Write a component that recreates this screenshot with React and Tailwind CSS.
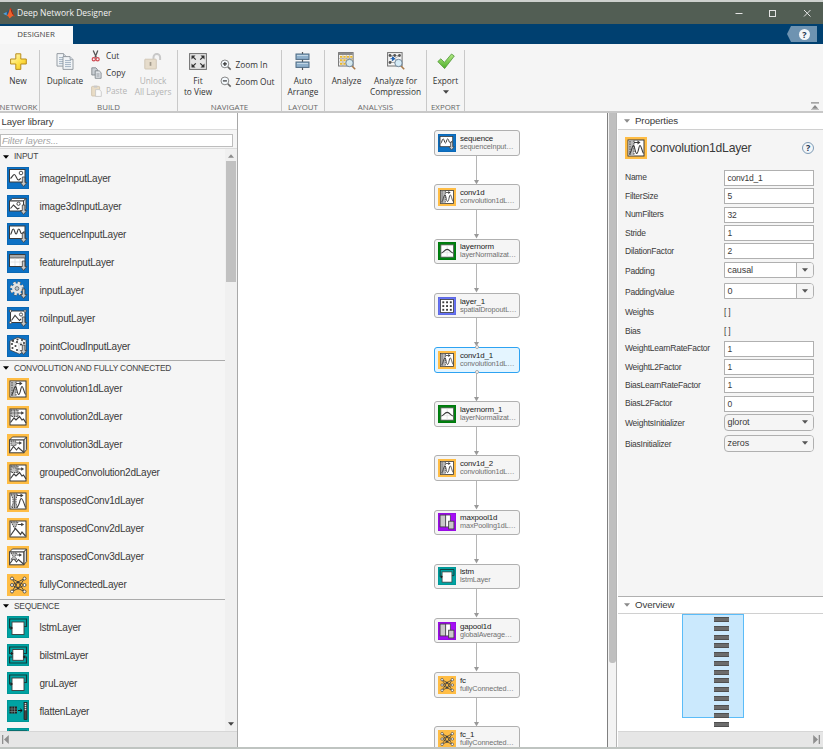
import clsx from 'clsx'

const dark = '#3c3c3c'

/* ---------- layer icons (22 x 22) ---------- */

const tileColors = {
  blue: '#0d71c4',
  amber: '#ffbd45',
  teal: '#00a3a3',
  green: '#00820f',
  indigo: '#6672f5',
  purple: '#a40cf5',
}

function Tile({ color, size = 22, children }) {
  return (
    <svg width={size} height={size} viewBox="0 0 22 22" className="block shrink-0" fill="none">
      <rect width="22" height="22" fill={tileColors[color]} />
      {color !== 'amber' && <rect x=".5" y=".5" width="21" height="21" stroke="#000" strokeOpacity=".08" />}
      {children}
    </svg>
  )
}

function DownArrow() {
  return <path d="M15.3 10h2.6v5.500h1.900l-3.200 4-3.200-4h1.900z" fill="#c9c9c9" stroke={dark} strokeWidth=".8" />
}

function CubeSides() {
  return (
    <g stroke={dark} strokeWidth=".9" strokeLinejoin="round">
      <path d="M2.6 6 5.4 3h14.2l-2.8 3z" fill="#fff" />
      <path d="M16.8 6l2.8-3v12.6l-2.8 3.2z" fill="#d8d8d8" />
    </g>
  )
}

function LayerIcon({ kind, size }) {
  switch (kind) {
    case 'image':
      return (
        <Tile color="blue" size={size}>
          <rect x="2.5" y="2.5" width="15.500" height="12.500" fill="#fff" stroke={dark} />
          <path d="M3.500 11.500c1.500-1 2.500-4 3.800-4 1.700 0 2.200 5.500 4.200 5.500 1 0 1.500-1.500 2.500-1.500" stroke={dark} strokeWidth="1.100" />
          <circle cx="14" cy="6" r="1.800" stroke={dark} strokeWidth=".9" />
          <DownArrow />
        </Tile>
      )
    case 'image3d':
      return (
        <Tile color="blue" size={size}>
          <path d="M2.500 6l3-2.600H19L16.500 6z" fill="#fff" stroke={dark} strokeWidth=".9" />
          <path d="M16.500 6L19 3.400v10l-2.500 3z" fill="#d8d8d8" stroke={dark} strokeWidth=".9" />
          <rect x="2.500" y="6" width="14" height="10" fill="#fff" stroke={dark} />
          <path d="M3.500 13.500L6.500 10l4 4 2-1" stroke={dark} strokeWidth="1.100" />
          <circle cx="11.500" cy="8.800" r="1.600" stroke={dark} strokeWidth=".9" />
          <DownArrow />
        </Tile>
      )
    case 'sequence':
      return (
        <Tile color="blue" size={size}>
          <rect x="2.500" y="3" width="15.500" height="12.500" fill="#fff" stroke={dark} />
          <path d="M3.500 11.500C4.700 11 4.800 6 6.300 6s1.400 5 2.800 5 1.200-5 2.700-5 1.400 4.500 2.700 4.500 1.500-1 3-2" stroke={dark} strokeWidth="1.200" />
          <DownArrow />
        </Tile>
      )
    case 'feature':
      return (
        <Tile color="blue" size={size}>
          <rect x="2.500" y="3.500" width="15.500" height="12" fill="#fff" stroke={dark} />
          <path d="M3 4h14.500v3H3z" fill="#a8a8a8" />
          <path d="M3 7h15" stroke={dark} strokeWidth=".7" />
          <path d="M3.500 11h14M8 7.500V15M13 7.500V15" stroke="#dedede" strokeWidth=".8" />
          <DownArrow />
        </Tile>
      )
    case 'input':
      return (
        <Tile color="blue" size={size}>
          <circle cx="10" cy="9.500" r="5.600" stroke="#555" strokeWidth="3.200" strokeDasharray="2.700 1.700" />
          <circle cx="10" cy="9.500" r="5.600" stroke="#e4e4e4" strokeWidth="2.400" strokeDasharray="2.400 2" />
          <circle cx="10" cy="9.500" r="4.900" fill="#e4e4e4" />
          <circle cx="10" cy="9.500" r="1.900" fill="#b9c7d2" stroke="#555" strokeWidth=".7" />
          <DownArrow />
        </Tile>
      )
    case 'roi':
      return (
        <Tile color="blue" size={size}>
          <rect x="3.500" y="4" width="14.500" height="11.500" fill="#fff" stroke={dark} />
          <path d="M4.500 13.500l3.500-5 4.500 5 1.500-1.500" stroke={dark} strokeWidth="1.100" />
          <circle cx="14" cy="7.500" r="1.600" stroke={dark} strokeWidth=".9" />
          {[[3.5, 4], [18, 4], [3.5, 15.5]].map(([x, y]) => (
            <circle key={`${x}-${y}`} cx={x} cy={y} r="1.200" fill="#fff" stroke={dark} strokeWidth=".8" />
          ))}
          <DownArrow />
        </Tile>
      )
    case 'pointcloud':
      return (
        <Tile color="blue" size={size}>
          <path d="M3 6l7.500-3.500L19 5v10l-6.500 4L3 15z" fill="#fff" stroke={dark} strokeWidth=".8" />
          <path d="M3 6l9 2.500V19M12 8.500L19 5" stroke="#bbb" strokeWidth=".6" />
          {[[6, 5.9], [10.5, 4.5], [10, 7], [15, 5], [5, 9], [8.5, 11], [5.5, 13], [10, 15], [14, 9.5], [17, 8]].map(([x, y]) => (
            <circle key={`${x}-${y}`} cx={x} cy={y} r="1.050" fill={dark} />
          ))}
          <DownArrow />
        </Tile>
      )
    case 'conv1d':
      return (
        <Tile color="amber" size={size}>
          <rect x="3" y="3" width="16" height="16" fill="#fff" stroke={dark} />
          <path d="M3.500 3.500H9v15H3.500z" fill="#b9b9b9" />
          <path d="M9 3.500v15M5 4v15" stroke={dark} strokeWidth=".9" strokeDasharray="1.500 1" />
          <path d="M4.500 17C6.500 16 6.800 9 8.300 8.500c1.700 0 1.700 8 3.400 8s2-8 3.300-8 1.800 5.500 3.500 8" stroke={dark} strokeWidth="1.100" />
          <path d="M9 5.500h4" stroke={dark} />
          <path d="M12.500 3.600l3 1.900-3 1.900z" fill={dark} />
        </Tile>
      )
    case 'conv2d':
    case 'group2d':
      return (
        <Tile color="amber" size={size}>
          <rect x="3" y="3" width="16" height="16" fill="#fff" stroke={dark} />
          <path d="M3.500 16.500L7 12l2 2 3.500-3.500 2.500 3.500 1.500-1 2.500 4" stroke={dark} strokeWidth="1.200" />
          <path d="M4 4h7v6.500H4z" fill="#c4c4c4" stroke={dark} strokeWidth=".9" strokeDasharray="1.500 .8" />
          {kind === 'conv2d' ? (
            <path d="M7.500 4v6M4 7h7" stroke={dark} strokeWidth=".5" />
          ) : (
            <path d="M5 5h4v4M6 6h4v4" stroke={dark} strokeWidth=".6" strokeDasharray="1 .7" />
          )}
          <path d="M11 7h4" stroke={dark} />
          <path d="M14.200 5.200l3 1.800-3 1.800z" fill={dark} />
        </Tile>
      )
    case 'conv3d':
    case 'trans3d':
      return (
        <Tile color="amber" size={size}>
          <CubeSides />
          <rect x="2.600" y="6" width="14.200" height="12.800" fill="#fff" stroke={dark} />
          <path d="M3 17.500l3.500-5 3 3.500 2-2.500 2 2 3 2.500" stroke={dark} strokeWidth="1.100" />
          {kind === 'conv3d' ? (
            <path d="M4 7h5v4.500H4z" fill="#b9b9b9" stroke={dark} strokeWidth=".8" strokeDasharray="1.300 .7" />
          ) : (
            <path d="M4 7h6l-2 3.500 2 3H4l2-3z" fill="#b9b9b9" stroke={dark} strokeWidth=".8" strokeDasharray="1.300 .7" />
          )}
          <path d="M9.500 9h3.500" stroke={dark} />
          <path d="M12.200 7.300L15 9l-2.800 1.700z" fill={dark} />
        </Tile>
      )
    case 'trans1d':
      return (
        <Tile color="amber" size={size}>
          <rect x="3" y="3" width="16" height="16" fill="#fff" stroke={dark} />
          <path d="M4 4h6.500L9 9v4.500l1.800 4H4.500L6 13.500V9z" fill="#b9b9b9" stroke={dark} strokeWidth=".9" strokeDasharray="1.500 .8" />
          <path d="M7.500 5v12" stroke={dark} strokeWidth=".7" />
          <path d="M10 17c2.500-1 2.700-8.500 4.200-8.500S17 13 18.500 17.500" stroke={dark} strokeWidth="1.100" />
          <path d="M10 5.500h4" stroke={dark} />
          <path d="M13.500 3.600l3 1.900-3 1.900z" fill={dark} />
        </Tile>
      )
    case 'trans2d':
      return (
        <Tile color="amber" size={size}>
          <rect x="3" y="3" width="16" height="16" fill="#fff" stroke={dark} />
          <path d="M3.500 17.500l5-7 5 6 1.500-2.500 3.500 4" stroke={dark} strokeWidth="1.200" />
          <path d="M4 4h7L9.500 7.500l-2 3L6 7.500z" fill="#b9b9b9" stroke={dark} strokeWidth=".9" strokeDasharray="1.500 .8" />
          <path d="M11 6.500h4" stroke={dark} />
          <path d="M14.200 4.700l3 1.800-3 1.800z" fill={dark} />
        </Tile>
      )
    case 'fc':
      return (
        <Tile color="amber" size={size}>
          <path d="M5 4.500l6 3.500 6.500-3.500M5 11l6-3 6.500 3M5 11l6 3.500 6.500-3.500M5 17.500l6-3 6.500 3M5 4.500l6 10M5 17.500L11 8M11 8l6.500 9.500M11 14.500l6.500-10" stroke={dark} strokeWidth=".9" />
          {[[5, 4.5], [5, 11], [5, 17.5], [17.5, 4.5], [17.5, 11], [17.5, 17.5]].map(([x, y]) => (
            <circle key={`${x}-${y}`} cx={x} cy={y} r="1.500" fill="#fff" stroke={dark} strokeWidth=".8" />
          ))}
          <circle cx="11" cy="8" r="1.100" fill={dark} />
          <circle cx="11" cy="14.500" r="1.100" fill={dark} />
        </Tile>
      )
    case 'lstm':
      return (
        <Tile color="teal" size={size}>
          <path d="M5 12H2.600V3h16.900v7.500H17" stroke="#123c3c" strokeWidth="1.200" />
          <rect x="5" y="6" width="12" height="12.500" fill="#fff" stroke={dark} strokeWidth=".9" />
          <path d="M3.500 10l2.500 2-2.500 2z" fill="#222" />
        </Tile>
      )
    case 'bilstm':
      return (
        <Tile color="teal" size={size}>
          <path d="M6 9.500H2.600V3h16.900v6.500H16M6 13H2.600v6h16.900v-6H16" stroke="#123c3c" strokeWidth="1.200" />
          <rect x="5.800" y="5.500" width="10.600" height="10.800" fill="#fff" stroke={dark} strokeWidth=".9" />
          <path d="M4 7.700l2.500 1.800L4 11.300zM18.200 11l-2.500 1.900 2.500 1.900z" fill="#222" />
        </Tile>
      )
    case 'flatten':
      return (
        <Tile color="teal" size={size}>
          <rect x="2.500" y="6.500" width="7.500" height="7" fill="#222" />
          <path d="M5 6.500v7M7.500 6.500v7M2.500 9H10M2.500 11.500H10" stroke="#8aa" strokeWidth=".5" />
          <path d="M11 10.500h4M13.200 8.800l2 1.700-2 1.700" stroke="#111" />
          <rect x="17" y="2.500" width="3" height="17" fill="#444" stroke="#111" strokeWidth=".6" />
          <path d="M18.500 3v8" stroke="#ddd" strokeDasharray="1.200 .8" strokeWidth="1.500" />
        </Tile>
      )
    case 'norm':
      return (
        <Tile color="green" size={size}>
          <rect x="3.500" y="3.500" width="15.500" height="15" fill="#fff" stroke="#555" />
          <path d="M11.200 4v14M4 13h14.500" stroke="#ddd" strokeWidth=".8" />
          <path d="M4 13.500c2.500 0 4-4.500 7.200-4.500s4.800 4.500 7.300 4.500" stroke={dark} strokeWidth="1.300" />
        </Tile>
      )
    case 'grid':
      return (
        <Tile color="indigo" size={size}>
          <rect x="3" y="3" width="16" height="16" fill="#fff" stroke={dark} />
          {[5.3, 9.9, 14.5].map((y) => [5.3, 9.9, 14.5].map((x) => (
            <rect key={`${x}-${y}`} x={x} y={y} width="2.300" height="2.300" fill={dark} />
          )))}
        </Tile>
      )
    case 'pool':
      return (
        <Tile color="purple" size={size}>
          <rect x="2.500" y="2.500" width="7" height="14.500" fill="#c9c9c9" stroke={dark} />
          <rect x="9.500" y="2.500" width="5.500" height="14.500" fill="#fff" stroke={dark} strokeWidth=".8" />
          <rect x="13" y="10" width="6.500" height="9.500" fill="#c9c9c9" stroke={dark} />
        </Tile>
      )
    default:
      return null
  }
}

/* ---------- toolstrip icons ---------- */

function NewIcon() {
  return (
    <svg width="17" height="17" viewBox="0 0 17 17">
      <defs>
        <linearGradient id="gold" x1="0" y1="0" x2="1" y2="1">
          <stop offset="0" stopColor="#fffbd0" />
          <stop offset=".55" stopColor="#ffe14a" />
          <stop offset="1" stopColor="#eebc14" />
        </linearGradient>
      </defs>
      <path d="M5.800.8h5v5.200h5.500v5h-5.500v5.400h-5V11H.6V6h5.200z" fill="url(#gold)" stroke="#b98d1d" />
    </svg>
  )
}

function Page({ x, y, w, h, lines }) {
  return (
    <g transform={`translate(${x} ${y})`}>
      <path d={`M0 0h${w - 3}l3 3v${h - 3}H0z`} fill="#f1f4f7" stroke="#8d949b" strokeWidth=".9" />
      <path d={`M${w - 3} 0v3h3`} fill="#cfd6dd" stroke="#8d949b" strokeWidth=".7" />
      {lines.map((ly) => (
        <path key={ly} d={`M2 ${ly}h${w - 4}`} stroke="#9aabbc" strokeWidth=".9" />
      ))}
    </g>
  )
}

function DuplicateIcon() {
  return (
    <svg width="18" height="17" viewBox="0 0 18 17">
      <Page x={1} y={0.6} w={9.5} h={12.5} lines={[4, 6, 8, 10]} />
      <Page x={7} y={3.6} w={10} h={12.8} lines={[4, 6, 8, 10]} />
    </svg>
  )
}

function CutIcon() {
  return (
    <svg width="11" height="12" viewBox="0 0 11 12" fill="none">
      <path d="M2.200.5l3.200 7M6.800.5L4 7.500" stroke="#555" strokeWidth="1.300" />
      <circle cx="2.800" cy="9.200" r="1.600" stroke="#cf4a52" strokeWidth="1.200" />
      <circle cx="6.600" cy="9.200" r="1.600" stroke="#cf4a52" strokeWidth="1.200" />
    </svg>
  )
}

function CopyIcon() {
  return (
    <svg width="11" height="12" viewBox="0 0 11 12">
      <path d="M.8.8h4l1.500 1.500V8H.8z" fill="#c9ced3" stroke="#767d84" strokeWidth=".8" />
      <path d="M4.200 3.800h4l1.900 1.900v5.600H4.200z" fill="#dfe3e7" stroke="#767d84" strokeWidth=".8" />
      <path d="M5.500 7h3M5.500 9h3" stroke="#767d84" strokeWidth=".7" />
    </svg>
  )
}

function PasteIcon() {
  return (
    <svg width="11" height="12" viewBox="0 0 11 12">
      <rect x=".6" y="1.400" width="8" height="9.600" rx=".8" fill="#e9dcc5" stroke="#cdbfa8" strokeWidth=".8" />
      <path d="M2.800.6h3.500v2H2.800z" fill="#c9c9c9" />
      <path d="M4.600 4.600h3.700l2 1.900v4.900H4.600z" fill="#fafafa" stroke="#c4c4c4" strokeWidth=".8" />
    </svg>
  )
}

function UnlockIcon() {
  return (
    <svg width="18" height="17" viewBox="0 0 18 17" fill="none">
      <path d="M9.500 6V4.200a3.300 3.300 0 0 1 6.600 0V7" stroke="#c9c9c9" strokeWidth="2" />
      <rect x=".8" y="6.200" width="11.500" height="9.800" rx=".6" fill="#e6dccb" stroke="#cfc4b2" strokeWidth=".9" />
      <path d="M6.500 9v3.800" stroke="#a29a8c" strokeWidth="1.700" />
    </svg>
  )
}

function FitIcon() {
  return (
    <svg width="18" height="17" viewBox="0 0 18 17">
      <rect x=".6" y=".6" width="16.800" height="15.800" fill="#e6e6e6" stroke="#6e6e6e" />
      <path d="M2.500 2.500h4L2.500 6.500zM15.500 2.500h-4l4 4zM2.500 14.500h4l-4-4zM15.500 14.500h-4l4-4z" fill="#333" />
      <path d="M4 4l2.800 2.600M14 4l-2.800 2.600M4 13l2.800-2.600M14 13l-2.800-2.600" stroke="#333" strokeWidth="1.200" />
    </svg>
  )
}

function ZoomIcon({ plus }) {
  return (
    <svg width="12" height="12" viewBox="0 0 12 12" fill="none">
      <path d="M7.500 7.500l3.200 3.100" stroke="#666" strokeWidth="1.700" />
      <circle cx="4.900" cy="4.900" r="3.900" fill="#f4f9fd" stroke="#888" />
      <path d={plus ? 'M2.900 4.900h4M4.900 2.900v4' : 'M2.900 4.900h4'} stroke="#333" strokeWidth="1.200" />
    </svg>
  )
}

function ArrangeIcon() {
  return (
    <svg width="17" height="18" viewBox="0 0 17 18">
      <path d="M8.500 0v18" stroke="#555" strokeWidth="1.200" />
      <rect x="2" y="2" width="13" height="5.400" fill="#8fb0cb" stroke="#4f6a82" />
      <rect x="2" y="10" width="13" height="5.400" fill="#8fb0cb" stroke="#4f6a82" />
      <path d="M3 3.500h11M3 11.500h11" stroke="#c3d7e6" />
    </svg>
  )
}

function AnalyzeIcon() {
  return (
    <svg width="18" height="18" viewBox="0 0 18 18" fill="none">
      <rect x=".6" y=".6" width="14.500" height="13.400" fill="#fff" stroke="#707070" />
      <path d="M1 1h13.800v2H1z" fill="#8a8a8a" />
      <path d="M4.900 3v11M8.300 3v11M11.600 3v11M1 6.500h14M1 10h14" stroke="#999" strokeWidth=".6" />
      {[3.8, 7.2, 10.8].map((y) => [2, 5.4, 8.8, 12.2].map((x) => (
        <rect key={`${x}-${y}`} x={x} y={y} width="2.300" height="2" fill="#e9b72e" />
      )))}
      <path d="M13.800 13.800l3.400 3.400" stroke="#a97a4a" strokeWidth="1.600" />
      <circle cx="11.500" cy="11" r="3.700" fill="#d3ebf8" fillOpacity=".9" stroke="#73879a" />
    </svg>
  )
}

function CompressIcon() {
  return (
    <svg width="18" height="18" viewBox="0 0 18 18" fill="none">
      <rect x=".6" y=".6" width="14.500" height="13.400" fill="#f4f4f4" stroke="#707070" />
      <path d="M3 3.500l4.500 3L3 10.500M12.500 3.500l-5 3 5 3.500M3 3.500h9.500M3 10.500h5" stroke="#8e8e8e" strokeWidth=".7" />
      {[[3, 3.5], [3, 10.5], [7.7, 3.5], [12.5, 3.5]].map(([x, y]) => (
        <circle key={`${x}-${y}`} cx={x} cy={y} r="1.400" fill="#555" />
      ))}
      <path d="M3.500 6.700H7M5.500 4.900l2.400 1.800-2.400 1.800z" fill="#1f62b5" stroke="#1f62b5" />
      <path d="M13.800 13.800l3.400 3.400" stroke="#a97a4a" strokeWidth="1.600" />
      <circle cx="11.500" cy="11" r="3.700" fill="#d3ebf8" fillOpacity=".9" stroke="#73879a" />
    </svg>
  )
}

function ExportIcon() {
  return (
    <svg width="18" height="17" viewBox="0 0 18 17">
      <defs>
        <linearGradient id="leaf" x1="0" y1="0" x2="0" y2="1">
          <stop offset="0" stopColor="#b4ea86" />
          <stop offset="1" stopColor="#4cae28" />
        </linearGradient>
      </defs>
      <path d="M.8 8.600l3-2.800 3.600 3.600L14.500 1l2.800 2L7.600 15.600z" fill="url(#leaf)" stroke="#4f9636" strokeWidth=".8" strokeLinejoin="round" />
    </svg>
  )
}

function MatlabLogo() {
  return (
    <svg width="12" height="12" viewBox="0 0 11 11">
      <path d="M.2 6.200L3.400 4.600 5 5.600 3.400 7.800z" fill="#4fa3dd" />
      <path d="M3.400 4.600C4.800 4 5.400 2 6.600.6L5.800 6 3.400 7.800z" fill="#28517d" />
      <path d="M6.600.6c1.200.4 2.200 5 4.200 8.200-1.600-.8-2.400-.6-3.200.4-.7.8-1.300 1.100-1.900 1.200-.3-1.300-1.100-2.200-2.300-2.600C5.400 6.400 5.600 2.400 6.600.6z" fill="#f0622a" />
      <path d="M6.600.6c1.200.4 2.200 5 4.200 8.200C8.600 7.400 7.200 4 6.600.6z" fill="#8c1d13" />
    </svg>
  )
}

function HelpIcon({ bordered }) {
  return (
    <span
      className={clsx(
        "flex items-center justify-center rounded-full bg-[#f2f6f9] font-['Open_Sans',sans-serif] text-[9px] font-bold leading-none text-[#1d3550]",
        bordered ? 'size-[12px] border border-[#7f9bb5]' : 'size-[11px]'
      )}
    >
      ?
    </span>
  )
}

function Caret({ className }) {
  return (
    <svg width="6" height="4" viewBox="0 0 6 4" className={clsx('block shrink-0', className)}>
      <path d="M0 .3h6L3 3.700z" fill="currentColor" />
    </svg>
  )
}

/* ---------- toolstrip ---------- */

function Section({ title, className, children }) {
  return (
    <div className={clsx('mt-[6px] flex shrink-0 flex-col border-r border-[#c9c9c9]', className)}>
      <div className="flex h-[51px] shrink-0 justify-center">{children}</div>
      <div className="flex h-[10px] shrink-0 justify-center whitespace-nowrap pt-px text-[7.900px] leading-[10px] text-[#666]">{title}</div>
    </div>
  )
}

function BigButton({ icon, lines, disabled, caret, className }) {
  return (
    <div
      className={clsx(
        'flex shrink-0 flex-col items-center whitespace-nowrap text-[8.300px] leading-[11.700px]',
        disabled ? 'text-[#b3b3b3]' : 'text-[#333]',
        className
      )}
    >
      <div className="mt-[2px] mb-[4.500px] flex h-[18px] items-center">{icon}</div>
      {lines.map((line) => (
        <span key={line}>{line}</span>
      ))}
      {caret && <Caret className="mt-[4px] text-[#444]" />}
    </div>
  )
}

function SmallButton({ icon, label, disabled }) {
  return (
    <div className={clsx('flex h-[17.600px] items-center gap-[4px] whitespace-nowrap text-[8.300px]', disabled ? 'text-[#b3b3b3]' : 'text-[#333]')}>
      {icon}
      <span>{label}</span>
    </div>
  )
}

function Toolstrip() {
  return (
    <div className="flex h-[69px] shrink-0 border-b-2 border-[#c8c8c8] bg-[#f5f5f5]">
      <Section title="NETWORK" className="w-[40px] pr-[2px]">
        <BigButton icon={<NewIcon />} lines={['New']} className="-ml-px" />
      </Section>
      <Section title="BUILD" className="w-[138px]">
        <BigButton icon={<DuplicateIcon />} lines={['Duplicate']} className="w-[48px]" />
        <div className="-mt-[3px] ml-[2px] w-[42px]">
          <SmallButton icon={<CutIcon />} label="Cut" />
          <SmallButton icon={<CopyIcon />} label="Copy" />
          <SmallButton icon={<PasteIcon />} label="Paste" disabled />
        </div>
        <BigButton icon={<UnlockIcon />} lines={['Unlock', 'All Layers']} disabled className="mr-[3px] w-[40px]" />
      </Section>
      <Section title="NAVIGATE" className="w-[104px]">
        <BigButton icon={<FitIcon />} lines={['Fit', 'to View']} className="w-[40px]" />
        <div className="w-[63px] pt-[6px] pl-[1.500px]">
          <SmallButton icon={<ZoomIcon plus />} label="Zoom In" />
          <SmallButton icon={<ZoomIcon />} label="Zoom Out" />
        </div>
      </Section>
      <Section title="LAYOUT" className="w-[43px]">
        <BigButton icon={<ArrangeIcon />} lines={['Auto', 'Arrange']} />
      </Section>
      <Section title="ANALYSIS" className="w-[102px]">
        <BigButton icon={<AnalyzeIcon />} lines={['Analyze']} className="w-[40px]" />
        <BigButton icon={<CompressIcon />} lines={['Analyze for', 'Compression']} className="w-[58px]" />
      </Section>
      <Section title="EXPORT" className="w-[38px]">
        <BigButton icon={<ExportIcon />} lines={['Export']} caret />
      </Section>
      <div className="flex flex-1 items-end justify-end pr-[4px] pb-[1px] text-[#8a8a8a]">
        <svg width="8" height="8" viewBox="0 0 8 8" fill="currentColor">
          <path d="M0 .3h8v1.200H0zM4 3l3.300 3.800H.7zM0 7h8v.6H0z" />
        </svg>
      </div>
    </div>
  )
}

/* ---------- layer library ---------- */

const groups = [
  {
    title: 'INPUT',
    items: [
      ['imageInputLayer', 'image'],
      ['image3dInputLayer', 'image3d'],
      ['sequenceInputLayer', 'sequence'],
      ['featureInputLayer', 'feature'],
      ['inputLayer', 'input'],
      ['roiInputLayer', 'roi'],
      ['pointCloudInputLayer', 'pointcloud'],
    ],
  },
  {
    title: 'CONVOLUTION AND FULLY CONNECTED',
    items: [
      ['convolution1dLayer', 'conv1d'],
      ['convolution2dLayer', 'conv2d'],
      ['convolution3dLayer', 'conv3d'],
      ['groupedConvolution2dLayer', 'group2d'],
      ['transposedConv1dLayer', 'trans1d'],
      ['transposedConv2dLayer', 'trans2d'],
      ['transposedConv3dLayer', 'trans3d'],
      ['fullyConnectedLayer', 'fc'],
    ],
  },
  {
    title: 'SEQUENCE',
    items: [
      ['lstmLayer', 'lstm'],
      ['bilstmLayer', 'bilstm'],
      ['gruLayer', 'lstm'],
      ['flattenLayer', 'flatten'],
      ['', 'lstm'],
    ],
  },
]

function CollapseArrow({ className }) {
  return (
    <svg width="7" height="9" viewBox="0 0 7 9" className={className} fill="#8f8f8f">
      <path d="M0 0h1.300v9H0zM6.800 0v9L2 4.500z" />
    </svg>
  )
}

function LayerLibrary() {
  return (
    <aside className="flex w-[238px] shrink-0 flex-col border-r border-[#a8a8a8]">
      <div className="h-[16px] shrink-0 bg-white pl-[1.500px] text-[9.600px] leading-[17px] tracking-[-0.070px]">Layer library</div>
      <div className="flex h-[20px] shrink-0 items-center border-y border-[#dcdcdc] bg-[#f5f5f5] pt-[2px]">
        <div className="h-[13px] w-[233px] border border-[#bdbdbd] bg-white pl-px text-[9.600px] italic leading-[11.500px] tracking-[-0.070px] text-[#a3a3a3]">
          Filter layers...
        </div>
      </div>
      <div className="flex min-h-0 flex-1 bg-[#f5f5f5]">
        <div className="min-w-0 flex-1 overflow-hidden">
          {groups.map((group, index) => (
            <section key={group.title}>
              <div
                className={clsx(
                  'flex items-center gap-[5.500px] pl-[2.500px] text-[8.400px] leading-none tracking-[-0.220px] text-[#444]',
                  index === 0 ? 'h-[15px]' : 'h-[14.500px] border-t border-[#ababab]'
                )}
              >
                <Caret className="text-black" />
                {group.title}
              </div>
              {group.items.map(([name, kind]) => (
                <div key={name} className="flex h-[28px] items-center gap-[11px] pl-[6.500px] text-[10px] tracking-[-0.220px]">
                  <LayerIcon kind={kind} />
                  {name}
                </div>
              ))}
            </section>
          ))}
        </div>
        <div className="flex w-[12px] shrink-0 flex-col items-center bg-[#f0f0f0]">
          <Caret className="mt-[5px] mb-[3px] rotate-180 text-[#8d8d8d]" />
          <div className="h-[121px] w-[10px] bg-[#c1c1c1]" />
          <Caret className="mt-auto mb-[5px] text-[#444]" />
        </div>
      </div>
      <div className="flex h-[16px] shrink-0 items-center border-t border-[#d6d6d6] bg-[#e6e6e6] pl-[2px]">
        <CollapseArrow />
      </div>
    </aside>
  )
}

/* ---------- network canvas ---------- */

const nodes = [
  ['sequence', 'sequenceInput…', 'sequence'],
  ['conv1d', 'convolution1dL…', 'conv1d'],
  ['layernorm', 'layerNormalizat…', 'norm'],
  ['layer_1', 'spatialDropoutL…', 'grid'],
  ['conv1d_1', 'convolution1dL…', 'conv1d'],
  ['layernorm_1', 'layerNormalizat…', 'norm'],
  ['conv1d_2', 'convolution1dL…', 'conv1d'],
  ['maxpool1d', 'maxPooling1dL…', 'pool'],
  ['lstm', 'lstmLayer', 'lstm'],
  ['gapool1d', 'globalAverage…', 'pool'],
  ['fc', 'fullyConnected…', 'fc'],
  ['fc_1', 'fullyConnected…', 'fc'],
]

function Port({ className }) {
  return <span className={clsx('absolute left-1/2 size-[4px] -translate-x-1/2 rounded-full border border-[#aaa] bg-white', className)} />
}

function Node({ name, type, kind, selected }) {
  return (
    <div
      className={clsx(
        'relative flex h-[25.600px] w-[86px] shrink-0 items-center gap-[4px] rounded-[3px] border pl-[3px]',
        selected ? 'border-[#2ea3f2] bg-[#e4f5ff]' : 'border-[#b0b0b0] bg-[#f5f5f5]'
      )}
    >
      <LayerIcon kind={kind} size={18} />
      <div className="whitespace-nowrap">
        <div className="text-[7.900px] leading-[8px] tracking-[-0.140px] text-[#222]">{name}</div>
        <div className="text-[7.300px] leading-[8px] tracking-[-0.130px] text-[#707070]">{type}</div>
      </div>
      {selected && (
        <>
          <Port className="-top-[2.500px]" />
          <Port className="-bottom-[2.500px]" />
        </>
      )}
    </div>
  )
}

function Canvas() {
  return (
    <main className="flex w-[379px] shrink-0 bg-white">
      <div className="flex w-[370px] flex-col items-center overflow-hidden border-r border-[#808080] pt-[17.200px] pl-[109px]">
        {nodes.map(([name, type, kind], index) => (
          <div key={name} className="flex shrink-0 flex-col items-center">
            {index > 0 && (
              <svg width="6" height="28.600" viewBox="0 0 6 28.600" className="block">
                <path d="M2.500 0v27" stroke="#b5b5b5" />
                <path d="M0 24h5L2.500 28.400z" fill="#999" />
              </svg>
            )}
            <Node name={name} type={type} kind={kind} selected={name === 'conv1d_1'} />
          </div>
        ))}
      </div>
      <div className="w-[9px] border-r border-[#b5b5b5] bg-[#f3f3f3] pl-[1px]">
        <div className="h-[550px] w-[6.500px] rounded-b-[3px] bg-[#bfbfbf]" />
      </div>
    </main>
  )
}

/* ---------- properties ---------- */

const properties = [
  { label: 'Name', value: 'conv1d_1', kind: 'text' },
  { label: 'FilterSize', value: '5', kind: 'text' },
  { label: 'NumFilters', value: '32', kind: 'text' },
  { label: 'Stride', value: '1', kind: 'text' },
  { label: 'DilationFactor', value: '2', kind: 'text' },
  { label: 'Padding', value: 'causal', kind: 'combo', height: 'h-[19px]' },
  { label: 'PaddingValue', value: '0', kind: 'combo', height: 'h-[23px]' },
  { label: 'Weights', value: '[ ]', kind: 'plain', height: 'h-[18px]' },
  { label: 'Bias', value: '[ ]', kind: 'plain', height: 'h-[19px]' },
  { label: 'WeightLearnRateFactor', value: '1', kind: 'text' },
  { label: 'WeightL2Factor', value: '1', kind: 'text' },
  { label: 'BiasLearnRateFactor', value: '1', kind: 'text' },
  { label: 'BiasL2Factor', value: '0', kind: 'text' },
  { label: 'WeightsInitializer', value: 'glorot', kind: 'select', height: 'h-[19.200px]' },
  { label: 'BiasInitializer', value: 'zeros', kind: 'select', height: 'h-[22.800px]' },
]

function Field({ kind, value }) {
  if (kind === 'plain') return <span className="pt-[2px]">{value}</span>
  if (kind === 'text') {
    return <div className="h-[16px] w-[90px] border border-[#b0b0b0] bg-white pl-[2.500px] leading-[14.500px]">{value}</div>
  }
  return (
    <div
      className={clsx(
        'flex h-[16.500px] w-[90px] items-stretch overflow-hidden border border-[#b0b0b0] text-[9px] leading-[14px] tracking-[-0.080px]',
        kind === 'combo' ? 'rounded-r-[4px] bg-white' : 'rounded-[4px] bg-[#f5f5f5]'
      )}
    >
      <span className="flex-1 pl-[2.500px]">{value}</span>
      <span className={clsx('flex w-[17px] items-center justify-center bg-[#f5f5f5]', kind === 'combo' && 'border-l border-[#b0b0b0]')}>
        <Caret className="text-[#555]" />
      </span>
    </div>
  )
}

function PanelHeader({ title }) {
  return (
    <div className="flex h-[17px] shrink-0 items-center gap-[5.500px] border-b border-[#d0d0d0] bg-white pl-[5.500px] text-[9.700px] leading-none tracking-[-0.120px]">
      <Caret className="text-[#8a8a8a]" />
      {title}
    </div>
  )
}

function Inspector() {
  return (
    <aside className="flex min-w-0 flex-1 flex-col border-l border-white bg-[#f5f5f5]">
      <PanelHeader title="Properties" />
      <div className="flex min-h-0 flex-1 flex-col">
        <div className="flex h-[38.700px] shrink-0 items-center gap-[3px] pr-[9px] pb-[3px] pl-[7px] text-[12.200px] tracking-[-0.240px]">
          <LayerIcon kind="conv1d" size={22} />
          <span className="flex-1">convolution1dLayer</span>
          <HelpIcon bordered />
        </div>
        {properties.map((p) => (
          <div key={p.label} className={clsx('flex shrink-0 items-center pl-[7px] text-[8.500px] tracking-[-0.250px]', p.height ?? 'h-[18.350px]')}>
            <span className={clsx('w-[99px] shrink-0', p.kind !== 'text' && 'pt-[2px]')}>{p.label}</span>
            <Field kind={p.kind} value={p.value} />
          </div>
        ))}
      </div>
      <div className="flex h-[135px] shrink-0 flex-col border-t border-[#b0b0b0] bg-white">
        <PanelHeader title="Overview" />
        <div className="relative flex-1 pl-[64px]">
          <div className="h-[104px] w-[62px] border border-[#5bbcf8] bg-[#cbe9fd]" />
          <div className="absolute top-[3px] left-[96px] flex flex-col gap-[3.770px]">
            {Array.from({ length: 13 }, (_, i) => (
              <div key={i} className="h-[5px] w-[14.500px] border-y border-[#505050] bg-[#6c6c6c]" />
            ))}
          </div>
        </div>
      </div>
      <div className="flex h-[16px] shrink-0 items-center justify-end border-t border-[#d6d6d6] bg-[#e6e6e6] pr-[3px]">
        <CollapseArrow className="rotate-180" />
      </div>
    </aside>
  )
}

export default function App() {
  return (
    <div className="flex h-[749px] w-[823px] flex-col overflow-hidden border-b-2 border-[#bfc4c1] bg-white font-['Liberation_Sans',Arial,sans-serif] text-[#3a3a3a]">
      <header className="shrink-0 font-['Open_Sans','Noto_Sans',sans-serif]">
        <div className="flex h-[24px] items-center border-t-2 border-[#cdd1ce] bg-[#525e54] pl-[3px] text-[8.500px] text-[#f2f2f2]">
          <MatlabLogo />
          <span className="ml-[2px] flex-1">Deep Network Designer</span>
          <svg width="76" height="9" viewBox="0 0 76 9" fill="none" stroke="#e4e4e4" className="mr-[12.500px]">
            <path d="M.5 4.500h7M69 1l6.500 6.500M75.500 1L69 7.500" />
            <rect x="34.500" y="1.500" width="6" height="6" />
          </svg>
        </div>
        <div className="flex h-[20px] items-end justify-between bg-[#004070]">
          <div className="flex h-[18px] w-[73px] items-center justify-center bg-[#f8f8f8] pr-px text-[7.900px] text-[#444]">DESIGNER</div>
          <div className="mr-[6px] mb-[2px] flex h-[16px] w-[30px] items-center justify-center bg-[#6e93b1] pl-[5px] [clip-path:polygon(4px_0,100%_0,100%_100%,4px_100%,0_50%)]">
            <HelpIcon />
          </div>
        </div>
        <Toolstrip />
      </header>
      <div className="flex min-h-0 flex-1">
        <LayerLibrary />
        <Canvas />
        <Inspector />
      </div>
    </div>
  )
}
